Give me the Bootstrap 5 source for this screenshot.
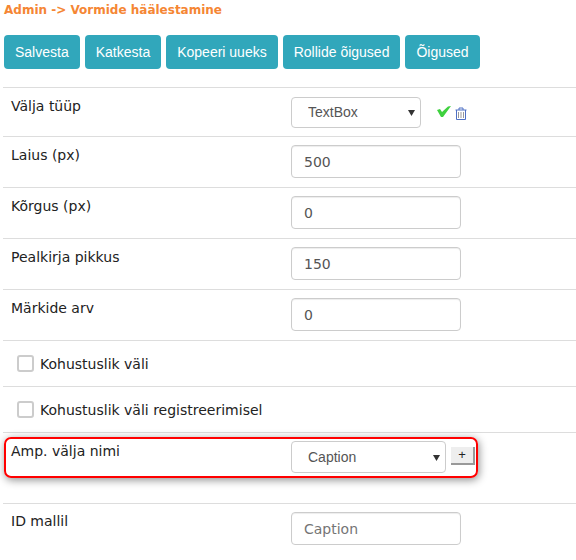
<!DOCTYPE html>
<html lang="et">
<head>
<meta charset="utf-8">
<title>Vormide häälestamine</title>
<link rel="stylesheet" href="https://cdn.jsdelivr.net/npm/bootstrap@5.3.0/dist/css/bootstrap.min.css">
<style>
body{font-family:"DejaVu Sans",Verdana,sans-serif;font-size:14px;color:#222;background:#fff;overflow:hidden}
.page-wrap{padding-left:3px;height:560px;overflow:hidden}
.crumb{color:#f58634;font-weight:700;font-size:12px;line-height:18px;padding:1px 0 0 1px;height:35px}
.tool-btn{font-family:"Liberation Sans",Arial,sans-serif;font-size:14px;line-height:20px;background:#31a7bb;color:#fff;border:0;border-radius:4px;padding:7px 11px;height:34px}
.tool-row{gap:5px;padding-left:1px;height:52px}
.form-line{border-top:1px solid #ddd;display:flex}
.line-label{width:288px;flex:none;padding:0 0 0 8px;line-height:25px;margin-top:-2px}
.ctl-text,.ctl-select{font-family:"Liberation Sans",Arial,sans-serif;font-size:14px;color:#555;border:1px solid #ccc;border-radius:4px;background:#fff}
.ctl-text{width:170px;height:33px;padding:0 12px;font-family:"DejaVu Sans",sans-serif;display:block;box-shadow:inset 0 1px 1px rgba(0,0,0,.075)}
.ctl-select{padding:0 12px 0 16px;height:32px;appearance:none;background:#fff url("data:image/svg+xml,%3Csvg xmlns='http://www.w3.org/2000/svg' width='7' height='7'%3E%3Cpath d='M0 1h7L3.500 7z' fill='%23333'/%3E%3C/svg%3E") no-repeat right 5px center}
.ctl-sel-a{width:130px;height:31px}
.ctl-sel-b{width:155px;margin-top:2px}
.h-51{height:51px}
.h-49{height:49px}
.v8{padding-top:8px}
.v9{padding-top:9px}
.chk-line{height:46px;padding:13px 0 0 14px;display:flex;align-items:flex-start;gap:6px;line-height:20px}
.box-chk{width:17px;height:17px;border:2px solid #ccc;border-radius:3px;background:#fff;display:block;appearance:none;margin-top:1px}
.hilite{margin:4px 98px 25px 1px;height:41px;border:2px solid #f00;border-radius:7px;box-shadow:1px 2px 8px rgba(0,0,0,.45);display:flex}
.hilite .line-label{width:285px;padding:1px 0 0 5px;line-height:22px;margin-top:0}
.plus-btn{width:24px;height:18px;background:#eee;border:0;border-right:2px solid #999;border-bottom:2px solid #999;font-family:"Liberation Sans",sans-serif;font-size:13px;line-height:14px;padding:0;color:#222;margin:8px 0 0 5px}
.lab-up{margin-top:-3px}
.ok-ic{margin:9px 0 0 16px}
.trash-ic{margin:10px 0 0 4px}
</style>
</head>
<body>
<div class="page-wrap">
  <div class="crumb">Admin -&gt; Vormide häälestamine</div>
  <div class="d-flex tool-row">
    <button class="tool-btn" type="button">Salvesta</button>
    <button class="tool-btn" type="button">Katkesta</button>
    <button class="tool-btn" type="button">Kopeeri uueks</button>
    <button class="tool-btn" type="button">Rollide õigused</button>
    <button class="tool-btn" type="button">Õigused</button>
  </div>
  <div class="form-line h-49 v9">
    <div class="line-label lab-up">Välja tüüp</div>
    <select class="ctl-select ctl-sel-a"><option>TextBox</option></select>
    <svg class="ok-ic" width="14" height="11" viewBox="0 0 14 11"><path d="M0 4l3-1 2 3 6-5.500 3-.500-8 11H4z" fill="#3fd13f"/></svg>
    <svg class="trash-ic" width="12" height="13" viewBox="0 0 12 13"><path d="M.5 3h11M4 3V1h4v2M1.500 3v9.500h9V3" fill="none" stroke="#4f70c4"/><path d="M3.500 5v6M6 5v6M8.500 5v6" stroke="#999" fill="none"/></svg>
  </div>
  <div class="form-line h-51 v8"><div class="line-label">Laius (px)</div><input class="ctl-text" value="500"></div>
  <div class="form-line h-51 v8"><div class="line-label">Kõrgus (px)</div><input class="ctl-text" value="0"></div>
  <div class="form-line h-51 v8"><div class="line-label">Pealkirja pikkus</div><input class="ctl-text" value="150"></div>
  <div class="form-line h-51 v8"><div class="line-label">Märkide arv</div><input class="ctl-text" value="0"></div>
  <div class="form-line chk-line"><input class="box-chk" type="checkbox"><span>Kohustuslik väli</span></div>
  <div class="form-line chk-line"><input class="box-chk" type="checkbox"><span>Kohustuslik väli registreerimisel</span></div>
  <div class="form-line d-block">
    <div class="hilite">
      <div class="line-label">Amp. välja nimi</div>
      <select class="ctl-select ctl-sel-b"><option>Caption</option></select>
      <button class="plus-btn" type="button">+</button>
    </div>
  </div>
  <div class="form-line h-51 v8"><div class="line-label lab-up">ID mallil</div><input class="ctl-text" placeholder="Caption"></div>
</div>
</body>
</html>
